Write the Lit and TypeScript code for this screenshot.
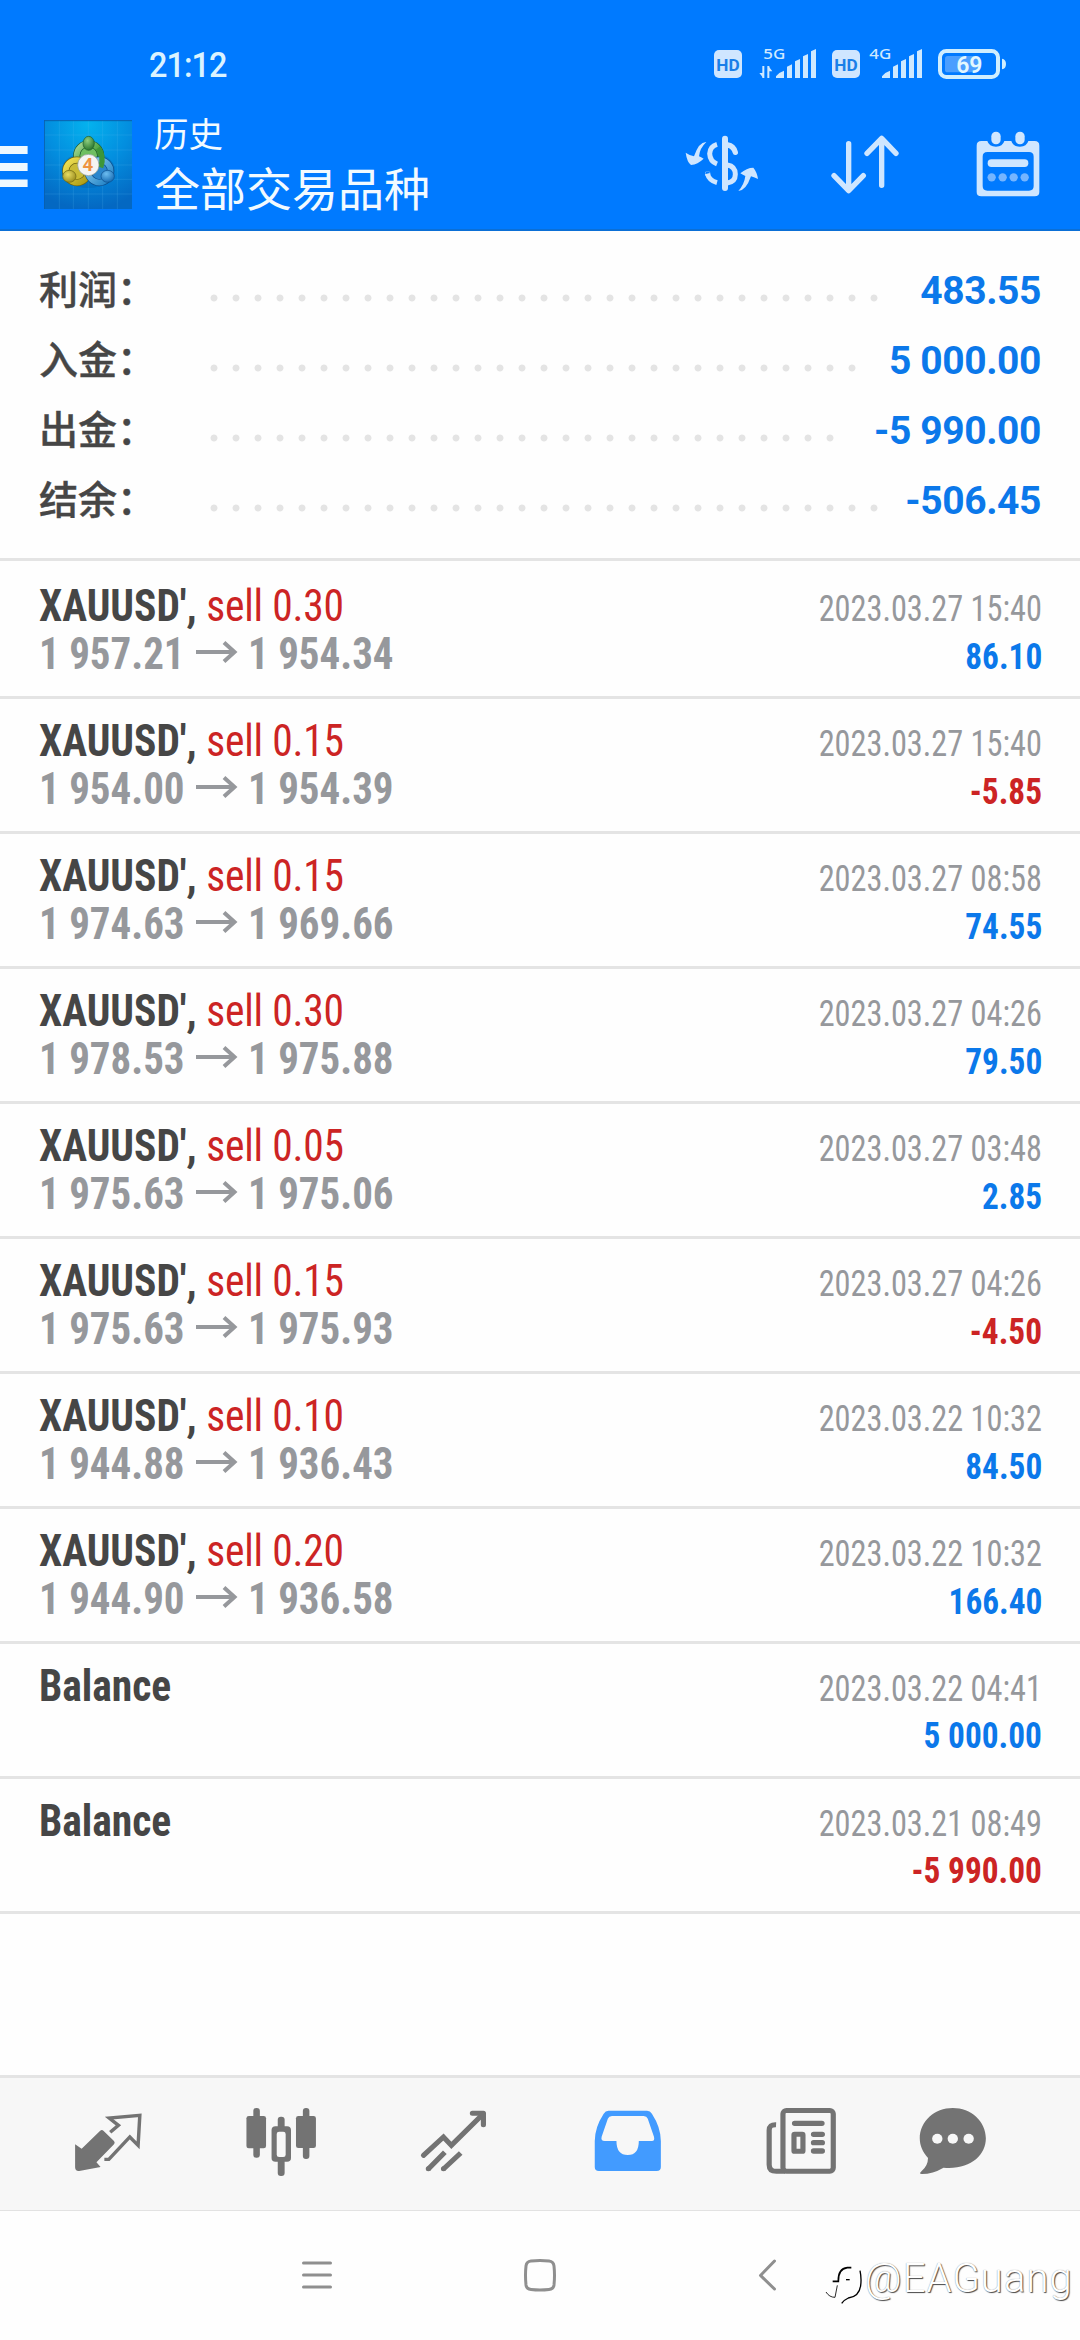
import { LitElement, html, css, svg } from "lit";
import { customElement, property } from "lit/decorators.js";

interface Total {
  label: string;
  value: string;
  dots: number;
}

interface Deal {
  symbol: string;
  action?: string;
  open?: string;
  close?: string;
  time: string;
  profit: string;
}

const TOTALS: Total[] = [
  { label: "利润：", value: "483.55", dots: 31 },
  { label: "入金：", value: "5 000.00", dots: 30 },
  { label: "出金：", value: "-5 990.00", dots: 29 },
  { label: "结余：", value: "-506.45", dots: 31 },
];

const DEALS: Deal[] = [
  { symbol: "XAUUSD',", action: "sell 0.30", open: "1 957.21", close: "1 954.34", time: "2023.03.27 15:40", profit: "86.10" },
  { symbol: "XAUUSD',", action: "sell 0.15", open: "1 954.00", close: "1 954.39", time: "2023.03.27 15:40", profit: "-5.85" },
  { symbol: "XAUUSD',", action: "sell 0.15", open: "1 974.63", close: "1 969.66", time: "2023.03.27 08:58", profit: "74.55" },
  { symbol: "XAUUSD',", action: "sell 0.30", open: "1 978.53", close: "1 975.88", time: "2023.03.27 04:26", profit: "79.50" },
  { symbol: "XAUUSD',", action: "sell 0.05", open: "1 975.63", close: "1 975.06", time: "2023.03.27 03:48", profit: "2.85" },
  { symbol: "XAUUSD',", action: "sell 0.15", open: "1 975.63", close: "1 975.93", time: "2023.03.27 04:26", profit: "-4.50" },
  { symbol: "XAUUSD',", action: "sell 0.10", open: "1 944.88", close: "1 936.43", time: "2023.03.22 10:32", profit: "84.50" },
  { symbol: "XAUUSD',", action: "sell 0.20", open: "1 944.90", close: "1 936.58", time: "2023.03.22 10:32", profit: "166.40" },
  { symbol: "Balance", time: "2023.03.22 04:41", profit: "5 000.00" },
  { symbol: "Balance", time: "2023.03.21 08:49", profit: "-5 990.00" },
];

const signal = (x: number) => svg`
  <g transform="translate(${x} 0)" fill="#cfe9ff">
    <path d="M0 114 V109 Q10 96 24 92 V114 Z"/>
    <path d="M33 114 V80 L48 73 V114 Z"/>
    <path d="M57 114 V64 L72 57 V114 Z"/>
    <path d="M81 114 V49 L96 42 V114 Z"/>
    <path d="M105 114 V34 L120 27 V114 Z"/>
  </g>`;

const hdBadge = (x: number) => svg`
  <rect x=${x} y="30" width="84" height="84" rx="15" fill="#cfe6ff"/>
  <text x=${x + 42} y="92" text-anchor="middle" class="hd" textLength="70" lengthAdjust="spacingAndGlyphs">HD</text>`;

@customElement("status-bar")
export class StatusBar extends LitElement {
  static styles = css`
    :host {
      display: flex;
      justify-content: space-between;
      align-items: flex-start;
      height: 110px;
      padding: 0 72px 0 148.5px;
      box-sizing: border-box;
    }
    .clock {
      font: 500 34.5px/40px Roboto, "Liberation Sans", sans-serif;
      letter-spacing: -1px;
      color: #dbf3ff;
      margin-top: 44.5px;
      transform: scaleX(0.94);
      transform-origin: left;
    }
    .indicators {
      display: block;
      margin-top: 38px;
    }
    .hd {
      font: 700 50px Roboto, sans-serif;
      fill: #1a7fe8;
    }
    .net {
      font: 500 45px "Noto Sans", sans-serif;
      fill: #cfe9ff;
    }
    .level {
      font: 600 69px Roboto, sans-serif;
      fill: #e2f8ff;
    }
  `;

  render() {
    return html`
      <span class="clock">21:12</span>
      <svg class="indicators" width="295" height="42" viewBox="99 -6 885 126">
        ${hdBadge(102)}
        <text x="250" y="57" class="net" textLength="66" lengthAdjust="spacingAndGlyphs">5G</text>
        <path d="M250 78 V114 M265 114 V78" stroke="#cfe9ff" stroke-width="6" fill="none" />
        <path d="M238 99 H250 V114 Z M277 94 H265 V78 Z" fill="#cfe9ff" />
        ${signal(288)} ${hdBadge(456)}
        <text x="568" y="57" class="net" textLength="66" lengthAdjust="spacingAndGlyphs">4G</text>
        ${signal(606)}
        <rect x="795" y="48" width="100" height="49" rx="8" fill="#4a9fff" />
        <rect x="780" y="33" width="174" height="78" rx="19" fill="none" stroke="#cfeeff" stroke-width="12" />
        <path d="M966 56 Q978 58 978 72 Q978 86 966 88 Z" fill="#cfeeff" />
        <text x="868" y="98" text-anchor="middle" class="level">69</text>
      </svg>
    `;
  }
}

@customElement("title-bar")
export class TitleBar extends LitElement {
  static styles = css`
    :host {
      display: flex;
      align-items: flex-start;
      height: 119px;
      padding-right: 40px;
      box-sizing: border-box;
      color: #f2faff;
      font-family: "Noto Sans CJK SC", sans-serif;
    }
    svg {
      display: block;
      flex: none;
    }
    .menu {
      margin: 36px 16px 0 0;
    }
    .logo {
      margin-top: 10px;
    }
    .digit {
      font: 700 54px "Noto Sans", sans-serif;
      fill: #ee9340;
    }
    .titles {
      display: flex;
      flex-direction: column;
      margin-left: 22px;
    }
    .sub {
      font-size: 34.5px;
      line-height: 44px;
    }
    .main {
      font-size: 46px;
      line-height: 62px;
      margin-top: 1px;
    }
    .actions {
      display: flex;
      margin: 20px 0 0 auto;
    }
    .sort {
      margin: 0 75px 0 70px;
    }
  `;

  render() {
    return html`
      <svg class="menu" width="28" height="42" viewBox="0 0 28 42" fill="#eef8ff">
        <rect y="0" width="27.6" height="8" />
        <rect y="17" width="27.6" height="8" />
        <rect y="33.5" width="27.6" height="7.5" />
      </svg>
      <svg class="logo" width="88" height="89" viewBox="132 30 264 267">
        <defs>
          <radialGradient id="sky" cx="0.5" cy="0.05" r="0.95">
            <stop offset="0" stop-color="#04b2ee" />
            <stop offset="0.5" stop-color="#038edf" />
            <stop offset="1" stop-color="#0468c2" />
          </radialGradient>
          <linearGradient id="green" x1="0" y1="0" x2="1" y2="1">
            <stop offset="0" stop-color="#a9d99a" />
            <stop offset="0.5" stop-color="#57ab4a" />
            <stop offset="1" stop-color="#237a25" />
          </linearGradient>
          <linearGradient id="gold" x1="0" y1="0" x2="1" y2="1">
            <stop offset="0" stop-color="#f1e255" />
            <stop offset="1" stop-color="#a99812" />
          </linearGradient>
          <linearGradient id="blue" x1="0" y1="0" x2="1" y2="1">
            <stop offset="0" stop-color="#8fd0f2" />
            <stop offset="1" stop-color="#1c7fc4" />
          </linearGradient>
          <radialGradient id="headGreen" cx="0.4" cy="0.3" r="0.8">
            <stop offset="0" stop-color="#8fce80" />
            <stop offset="1" stop-color="#1c6b22" />
          </radialGradient>
          <radialGradient id="headGold" cx="0.4" cy="0.35" r="0.8">
            <stop offset="0" stop-color="#e9dd63" />
            <stop offset="1" stop-color="#8b7d10" />
          </radialGradient>
          <radialGradient id="headBlue" cx="0.4" cy="0.3" r="0.8">
            <stop offset="0" stop-color="#6dbdf0" />
            <stop offset="1" stop-color="#0d62ac" />
          </radialGradient>
        </defs>
        <rect x="132" y="30" width="264" height="267" fill="url(#sky)" />
        <path d="M178 30V297M220 30V297M265 30V297M308 30V297M352 30V297M132 75H396M132 120H396M132 165H396M132 208H396M132 252H396" stroke="#5fc0f5" stroke-opacity="0.28" stroke-width="2" />
        <path d="M132 32H396M133 30V297" stroke="#0a5fae" stroke-width="3" fill="none" />
        <ellipse cx="265" cy="180" rx="80" ry="54" fill="#034a90" opacity="0.25" />
        <circle cx="266" cy="137" r="36" fill="#6fbf62" stroke="#1d5a2b" stroke-width="21" />
        <circle cx="266" cy="137" r="36" fill="none" stroke="url(#green)" stroke-width="17" />
        <circle cx="231" cy="184" r="34" fill="#c9bb35" stroke="#6d6410" stroke-width="21" />
        <circle cx="231" cy="184" r="34" fill="none" stroke="url(#gold)" stroke-width="17" />
        <circle cx="298" cy="184" r="34" fill="#2a86cc" stroke="#0b4d8c" stroke-width="21" />
        <circle cx="298" cy="184" r="34" fill="none" stroke="url(#blue)" stroke-width="17" />
        <path d="M294 114 Q314 138 302 172" fill="none" stroke="#3d9638" stroke-width="16" />
        <ellipse cx="266" cy="100" rx="17" ry="21" fill="url(#headGreen)" stroke="#1d5a2b" stroke-width="2" />
        <ellipse cx="208" cy="199" rx="20" ry="18" fill="url(#headGold)" stroke="#6d6410" stroke-width="2" />
        <ellipse cx="323" cy="199" rx="20" ry="18" fill="url(#headBlue)" stroke="#0b4d8c" stroke-width="2" />
        <circle cx="265" cy="165" r="32" fill="#f5f4f3" stroke="#8a9a94" stroke-width="2" />
        <text x="264" y="184" text-anchor="middle" class="digit">4</text>
      </svg>
      <div class="titles">
        <span class="sub">历史</span>
        <span class="main">全部交易品种</span>
      </div>
      <div class="actions">
        <svg width="75" height="70" viewBox="135 300 225 210">
          <g fill="none" stroke="#cfe6ff" stroke-linecap="round">
            <path d="M255 326 V474" stroke-width="18" />
            <path d="M263 345 Q281 348 286 367" stroke-width="16" />
            <path d="M262 405 Q286 409 286 433 Q286 456 262 459" stroke-width="15" />
            <path d="M231 343 Q210 349 209 371 Q210 394 231 402" stroke-width="15" stroke-linecap="butt" />
            <path d="M202 431 Q208 452 231 458" stroke-width="15" stroke-linecap="butt" />
            <circle cx="203" cy="431" r="0.5" stroke-width="15" />
          </g>
          <path d="M199 336 Q177 335 162 379 Q150 377 137 368 Q141 396 153 405 Q173 403 191 386 Q183 381 177 379 Q179 355 199 336 Z" fill="#cfe6ff" />
          <path d="M295 483 Q318 482 333 439 Q344 442 354 447 Q351 426 340 413 Q320 413 301 430 Q309 435 316 438 Q313 463 295 483 Z" fill="#cfe6ff" />
        </svg>
        <svg class="sort" width="70" height="70" viewBox="570 300 210 210" fill="none" stroke="#cfe6ff" stroke-width="16" stroke-linecap="round" stroke-linejoin="round">
          <path d="M626 341 V481 M582 437 L626 482 L670 437" />
          <path d="M725 466 V328 M681 370 L725 325 L768 370" />
        </svg>
        <svg width="65" height="70" viewBox="1005 300 195 210">
          <path fill="#cfe6ff" fill-rule="evenodd" d="M1024 333 H1042 Q1047 350 1068 350 Q1088 350 1093 333 H1114 Q1119 350 1140 350 Q1160 350 1165 333 H1184 Q1198 333 1198 347 V486 Q1198 499 1184 499 H1024 Q1010 499 1010 486 V347 Q1010 333 1024 333 Z M1042 366 Q1028 366 1028 380 V468 Q1028 482 1042 482 H1167 Q1181 482 1181 468 V380 Q1181 366 1167 366 Z" />
          <rect x="1054" y="305" width="28" height="38" rx="14" fill="#cfe6ff" />
          <rect x="1126" y="305" width="28" height="38" rx="14" fill="#cfe6ff" />
          <rect x="1043" y="388" width="122" height="23" rx="11" fill="#cfe6ff" />
          <g fill="#75b5ff">
            <circle cx="1055" cy="442" r="12.5" />
            <circle cx="1088" cy="442" r="12.5" />
            <circle cx="1121" cy="442" r="12.5" />
            <circle cx="1154" cy="442" r="12.5" />
          </g>
        </svg>
      </div>
    `;
  }
}

@customElement("totals-panel")
export class TotalsPanel extends LitElement {
  static styles = css`
    :host {
      display: flex;
      flex-direction: column;
      padding: 21px 39px 26px 39px;
      border-bottom: 3px solid #e4e4e4;
    }
    .row {
      display: flex;
      align-items: baseline;
      height: 70px;
      line-height: 70px;
    }
    .label {
      width: 163.5px;
      font: 500 39px/70px "Noto Sans CJK SC", sans-serif;
      color: #464646;
      -webkit-text-stroke: 0.4px #464646;
      white-space: nowrap;
    }
    .dots {
      align-self: flex-start;
      height: 8px;
      margin-top: 41.5px;
      background: radial-gradient(circle at center, #e4e4e4 3px, transparent 3.9px) 0 0 / 22px 8px repeat-x;
    }
    .value {
      margin-left: auto;
      font: 700 39px/70px Roboto, "Liberation Sans", sans-serif;
      letter-spacing: -0.4px;
      color: #0b78ea;
      white-space: nowrap;
    }
  `;

  render() {
    return TOTALS.map(
      (t) => html`
        <div class="row">
          <span class="label">${t.label}</span>
          <span class="dots" style="width:${t.dots * 22}px"></span>
          <span class="value">${t.value}</span>
        </div>
      `
    );
  }
}

@customElement("deal-row")
export class DealRow extends LitElement {
  static styles = css`
    :host {
      display: block;
      height: 114px;
      padding: 18px 38px 0 39px;
      border-bottom: 3px solid #e4e4e4;
      font-family: "Roboto Condensed", Roboto, "Liberation Sans Narrow", sans-serif;
      font-stretch: 75%;
      line-height: 48px;
      color: #96989c;
    }
    .line {
      display: flex;
      align-items: baseline;
      height: 48px;
      white-space: nowrap;
    }
    .left {
      font-size: 44px;
    }
    .title {
      transform: scaleX(0.943);
      transform-origin: left;
    }
    .right {
      font-size: 36px;
      margin-left: auto;
      transform-origin: right;
    }
    .time {
      transform: scaleX(0.897);
    }
    .symbol {
      font-weight: 700;
      color: #464646;
    }
    .action {
      color: #cc2424;
      letter-spacing: -0.2px;
    }
    .prices {
      font-weight: 700;
    }
    .price {
      display: inline-block;
      width: 145.5px;
      transform: scaleX(0.931);
      transform-origin: left;
    }
    .arrow {
      display: inline-block;
      margin: 0 10.5px 0 11px;
    }
    .profit {
      font-weight: 700;
      color: #0b78ea;
      transform: scaleX(0.925);
    }
    .loss {
      color: #cc2424;
    }
    .solo {
      line-height: 53.5px;
    }
  `;

  @property({ attribute: false }) deal!: Deal;

  render() {
    const d = this.deal;
    return html`
      <div class="line">
        <span class="left title"><span class="symbol">${d.symbol}</span>${d.action ? html` <span class="action">${d.action}</span>` : ""}</span>
        <span class="right time">${d.time}</span>
      </div>
      <div class="line ${d.open ? "" : "solo"}">
        ${d.open
          ? html`<span class="left prices"><span class="price">${d.open}</span><svg class="arrow" width="42" height="28" viewBox="0 0 42 28" fill="none" stroke="#96989c" stroke-width="4"><path d="M0 11 H38 M28 1.5 L38.5 11 L28 20.500" /></svg><span class="price">${d.close}</span></span>`
          : ""}
        <span class="right profit ${d.profit.startsWith("-") ? "loss" : ""}">${d.profit}</span>
      </div>
    `;
  }
}

@customElement("tab-bar")
export class TabBar extends LitElement {
  static styles = css`
    :host {
      display: flex;
      align-items: flex-start;
      height: 105px;
      padding: 27px 0 0 72.3px;
      background: #f7f7f7;
      border-top: 3px solid #e4e4e4;
      border-bottom: 1px solid #e2e2e2;
    }
    svg {
      display: block;
      flex: none;
    }
    .chart {
      margin-left: 98.2px;
    }
    .trade {
      margin-left: 99.9px;
    }
    .history {
      margin-left: 101px;
    }
    .news {
      margin-left: 99.8px;
    }
    .chat {
      margin-left: 79.2px;
    }
  `;

  render() {
    return html`
      <svg width="72.3" height="75" viewBox="210 135 210 225" preserveAspectRatio="none">
        <path d="M219 253 L238 266 L292 212 Q297 208 302 213 L332 243 Q336 248 332 253 L281 307 L293 321 L231 333 Q219 334 219 322 Z" fill="#737373" />
        <path d="M321 217 L345 196 L318 174 L407 166 L402 256 L378 231 L317 298 H304" fill="none" stroke="#737373" stroke-width="10" />
      </svg>
      <svg class="chart" width="75.7" height="75" viewBox="705 135 220 225" preserveAspectRatio="none">
        <g fill="#737373">
          <rect x="735" y="144" width="19" height="149" rx="9" />
          <rect x="715" y="168" width="57" height="97" rx="7" />
          <rect x="879" y="144" width="19" height="153" rx="9" />
          <rect x="859" y="168" width="58" height="96" rx="7" />
          <rect x="806" y="170" width="20" height="40" rx="9" />
          <rect x="806" y="290" width="20" height="58" rx="9" />
        </g>
        <rect x="795.5" y="206" width="41.5" height="92" rx="4" fill="#737373" stroke="#737373" stroke-width="15" />
        <rect x="803" y="215" width="26" height="76" rx="7" fill="#f7f7f7" />
      </svg>
      <svg class="trade" width="72.3" height="75" viewBox="1215 135 210 225" preserveAspectRatio="none" fill="none" stroke="#737373" stroke-width="15" stroke-linejoin="round">
        <path d="M1231 286 L1289 231 L1312 256 L1404 162" stroke-linejoin="miter" stroke-linecap="round" />
        <path d="M1373 160 H1405 V194" stroke-linecap="round" />
        <path d="M1245 327 L1293 277 M1289 327 L1339 279" />
        <path d="M1245 326 h0.1 M1289 326 h0.1" stroke-linecap="round" />
      </svg>
      <svg class="history" width="72.3" height="75" viewBox="150 135 210 225" preserveAspectRatio="none">
        <path fill="#429bff" fill-rule="evenodd" d="M198 152 H310 Q319 152 324 161 Q350 202 350 243 V321 Q350 333 338 333 H170 Q158 333 158 321 V243 Q158 202 184 161 Q189 152 198 152 Z M208 168 Q199 168 196 176 L178 230 Q175 243 187 243 H221 Q221 285 254 285 Q286 285 286 243 H324 Q333 243 330 230 L312 176 Q309 168 300 168 Z" />
      </svg>
      <svg class="news" width="74.1" height="75" viewBox="650 135 215 225" preserveAspectRatio="none">
        <g fill="none" stroke="#737373" stroke-width="15">
          <rect x="705" y="151.500" width="146" height="182" rx="10" />
          <path d="M685 194 Q665 193 665 211 V314 Q665 334 686 334 H712" />
          <path d="M739 190 H818 M794 223 H819 M794 248 H819 M794 273 H819" stroke-width="16" stroke-linecap="round" />
          <rect x="737" y="223" width="26" height="51" rx="2" />
        </g>
      </svg>
      <svg class="chat" width="72.3" height="75" viewBox="1095 135 210 225" preserveAspectRatio="none">
        <path fill="#737373" d="M1199 144 C1252 144 1295 184 1295 235 C1295 288 1248 330 1172 323 Q1141 342 1109 342 Q1099 342 1108 334 Q1127 317 1127 294 C1112 277 1103 258 1103 235 C1103 184 1146 144 1199 144 Z" />
        <g fill="#f7f7f7">
          <circle cx="1154" cy="236" r="15" />
          <circle cx="1199" cy="236" r="15" />
          <circle cx="1245" cy="236" r="15" />
        </g>
      </svg>
    `;
  }
}

@customElement("system-bar")
export class SystemBar extends LitElement {
  static styles = css`
    :host {
      display: flex;
      align-items: center;
      position: relative;
      height: 129px;
      padding-left: 301px;
      box-sizing: border-box;
    }
    svg {
      display: block;
      flex: none;
    }
    .home {
      margin-left: 190px;
    }
    .back {
      margin-left: 200px;
    }
    .credit {
      position: absolute;
      left: 824px;
      top: 43px;
      display: flex;
      align-items: flex-start;
    }
    .name {
      margin: 2px 0 0 1px;
      font: 300 40px/46px Roboto, "Liberation Sans", sans-serif;
      letter-spacing: 1.1px;
      color: #ffffff;
      text-shadow: 1px 1px 1px #4a4a4a, 0 0 1px #8a8a8a;
      white-space: nowrap;
    }
  `;

  render() {
    return html`
      <svg width="32" height="36" viewBox="0 0 32 36" fill="none" stroke="#8f8f8f" stroke-width="3" stroke-linecap="round">
        <path d="M2.500 5 H29.500 M2.500 17 H29.500 M2.500 29 H29.500" />
      </svg>
      <svg class="home" width="34" height="36" viewBox="0 0 34 36" fill="none" stroke="#8f8f8f" stroke-width="3">
        <path d="M8 3 Q17 2 26 3 Q30.500 3.500 31 8 Q32 17 31 27 Q30.500 31 26 31.500 Q17 32.500 8 31.500 Q3.500 31 3 27 Q2 17 3 8 Q3.500 3.500 8 3 Z" />
      </svg>
      <svg class="back" width="22" height="36" viewBox="0 0 22 36" fill="none" stroke="#8f8f8f" stroke-width="3" stroke-linecap="round" stroke-linejoin="round">
        <path d="M17.500 3 L3.500 17.500 L17.500 31" />
      </svg>
      <div class="credit">
        <svg width="40" height="52" viewBox="12 12 120 156" fill="none" stroke="#000000" stroke-linecap="butt">
          <path d="M38 94 H55 Q54 56 82 53 H94" stroke-width="5" />
          <path d="M78 89 H89" stroke-width="4" />
          <path d="M120 62 Q125 85 122 106 Q118 140 85 144 Q72 150 65 160" stroke-width="4" />
          <path d="M52 106 L45 142 Q28 142 18 126" stroke-width="2.500" />
        </svg>
        <span class="name">@EAGuang</span>
      </div>
    `;
  }
}

@customElement("app-root")
export class AppRoot extends LitElement {
  static styles = css`
    :host {
      display: flex;
      flex-direction: column;
      width: 1080px;
      height: 2340px;
      overflow: hidden;
      background: #fefefe;
    }
    .top {
      background: #007aff;
      border-bottom: 2px solid #0b6fd6;
    }
    .deals {
      flex: 1;
      padding-top: 3px;
    }
  `;

  render() {
    return html`
      <header class="top">
        <status-bar></status-bar>
        <title-bar></title-bar>
      </header>
      <totals-panel></totals-panel>
      <main class="deals">${DEALS.map((d) => html`<deal-row .deal=${d}></deal-row>`)}</main>
      <tab-bar></tab-bar>
      <system-bar></system-bar>
    `;
  }
}
